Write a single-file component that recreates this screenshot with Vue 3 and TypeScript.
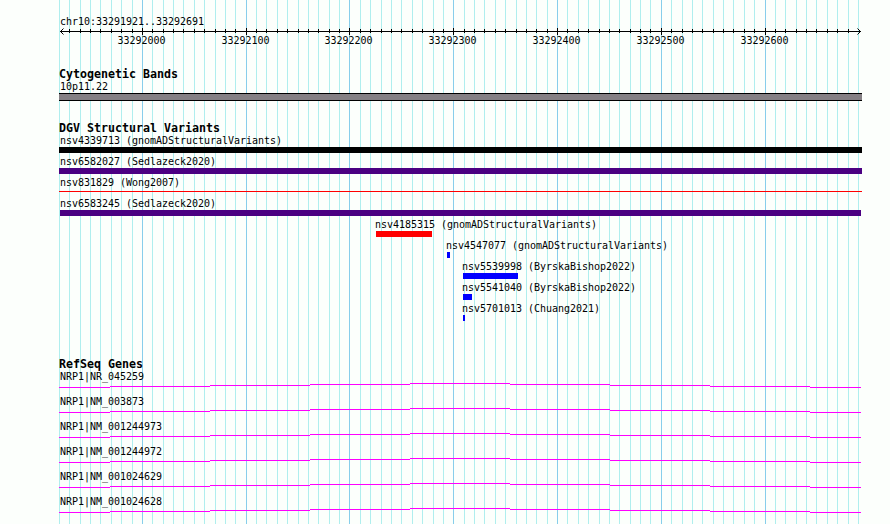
<script setup lang="ts">
type Variant = { name: string, start: number, width: number, color: string, thin?: boolean }

const region = 'chr10:33291921..33292691'

// one grid line every 10 bp, a major one every 100 bp
const gridLines = Array.from({ length: 78 }, (_, i) => ({
    x: Math.floor(59.395 + i * 10.378),
    position: 33291920 + i * 10,
    major: i % 10 === 8
}))
const ticks = gridLines.slice(1, -1)
const majorTicks = gridLines.filter(line => line.major)

const variants: Variant[] = [
    { name: 'nsv4339713 (gnomADStructuralVariants)', start: 59, width: 803, color: '#000000' },
    { name: 'nsv6582027 (Sedlazeck2020)', start: 59, width: 803, color: '#4b0082' },
    { name: 'nsv831829 (Wong2007)', start: 59, width: 803, color: '#ff0000', thin: true },
    { name: 'nsv6583245 (Sedlazeck2020)', start: 60, width: 801, color: '#4b0082' },
    { name: 'nsv4185315 (gnomADStructuralVariants)', start: 376, width: 56, color: '#ff0000' },
    { name: 'nsv4547077 (gnomADStructuralVariants)', start: 447, width: 3, color: '#0000ff' },
    { name: 'nsv5539998 (ByrskaBishop2022)', start: 463, width: 55, color: '#0000ff' },
    { name: 'nsv5541040 (ByrskaBishop2022)', start: 463, width: 9, color: '#0000ff' },
    { name: 'nsv5701013 (Chuang2021)', start: 463, width: 2, color: '#0000ff' }
]

const genes = [
    'NRP1|NR_045259',
    'NRP1|NM_003873',
    'NRP1|NM_001244973',
    'NRP1|NM_001244972',
    'NRP1|NM_001024629',
    'NRP1|NM_001024628'
]

// intron steps, they rise to the middle and go back down
const intronEdges = [59, 110, 210, 310, 410, 510, 610, 710, 810, 861]
const introns = intronEdges.slice(0, -1).map((x, i) => ({
    x,
    y: Math.abs(4 - i),
    width: intronEdges[i + 1] - x
}))
</script>

<template>
    <div class="browser">
        <svg class="grid" width="890" height="524" shape-rendering="crispEdges">
            <rect v-for="line in gridLines" :key="line.x" :class="{ major: line.major }" :x="line.x" y="0"
                width="1" height="524" />
        </svg>
        <main class="tracks">
            <header class="region label">{{ region }}</header>
            <svg class="ruler" width="890" height="20">
                <g shape-rendering="crispEdges">
                    <rect x="60" y="4" width="801" height="1" />
                    <rect v-for="tick in ticks" :key="tick.x" :x="tick.x" :y="tick.major ? 1 : 2" width="1"
                        :height="tick.major ? 7 : 4" />
                </g>
                <path d="M63.5 1.5 60.5 4.5 63.5 7.5M857.5 1.5 860.5 4.5 857.5 7.5" />
                <text v-for="tick in majorTicks" :key="tick.x" :x="tick.x - 24.5" y="17">{{ tick.position }}</text>
            </svg>

            <section class="track cytobands">
                <h2>Cytogenetic Bands</h2>
                <div class="label">10p11.22</div>
                <div class="band"></div>
            </section>

            <section class="track variants">
                <h2>DGV Structural Variants</h2>
                <div v-for="item in variants" :key="item.name" class="variant">
                    <div class="label" :style="{ marginLeft: Math.max(item.start - 1, 60) + 'px' }">{{ item.name }}</div>
                    <div :class="['bar', { thin: item.thin }]"
                        :style="{ marginLeft: item.start + 'px', width: item.width + 'px', background: item.color }">
                    </div>
                </div>
            </section>

            <section class="track genes">
                <h2>RefSeq Genes</h2>
                <div v-for="gene in genes" :key="gene" class="gene">
                    <div class="label">{{ gene }}</div>
                    <svg width="890" height="5" shape-rendering="crispEdges">
                        <rect v-for="step in introns" :key="step.x" :x="step.x" :y="step.y" :width="step.width"
                            height="1" />
                    </svg>
                </div>
            </section>
        </main>
    </div>
</template>

<style>
body {
    margin: 0;
    background: #fcfffc;
    overflow: hidden;
}
</style>

<style scoped>
.browser {
    position: relative;
    width: 890px;
    height: 524px;
    overflow: hidden;
    background: #fcfffc;
    color: #000;
    font: 10px/14px "DejaVu Sans Mono", monospace;
    letter-spacing: -0.02px;
}

/* lies behind all tracks */
.grid {
    position: absolute;
    top: 0;
    left: 0;
    fill: #afeeee;
}

.grid .major {
    fill: #87ceeb;
}

.tracks {
    position: relative;
    display: flex;
    flex-direction: column;
    padding-top: 15px;
}

.label {
    height: 12px;
    margin-left: 60px;
    white-space: pre;
}

.ruler {
    display: block;
    fill: #000;
}

.ruler path {
    fill: none;
    stroke: #000;
}

h2 {
    height: 13px;
    margin: 0 0 0 59px;
    font-size: 11.63px;
    line-height: 15px;
    letter-spacing: 0;
    white-space: pre;
}

.cytobands {
    margin-top: 20px;
}

.band {
    box-sizing: border-box;
    width: 803px;
    height: 8px;
    margin: 1px 0 0 59px;
    border: solid #000;
    border-width: 1px 0;
    background: #858084;
}

.variants {
    margin-top: 20px;
}

.variant {
    height: 21px;
}

.variant .label,
.gene .label {
    height: 13px;
}

.bar {
    height: 6px;
}

/* hairline, runs through the middle of a normal bar */
.bar.thin {
    height: 1px;
    margin-top: 2px;
}

.variant:has(.thin) .label {
    height: 13px;
    margin-bottom: 2px;
}

.genes {
    margin-top: 34px;
}

.gene {
    height: 25px;
}

.gene svg {
    display: block;
    fill: #ff00ff;
}
</style>
